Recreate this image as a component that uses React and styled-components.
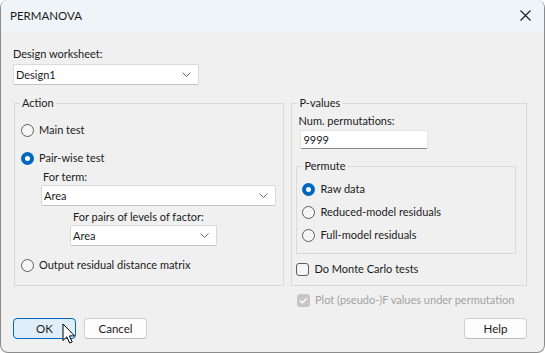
import React from "react";
import styled, { createGlobalStyle } from "styled-components";

const Global = createGlobalStyle`
  html, body { margin: 0; padding: 0; background: #ffffff; }
  body { font-family: Lato, "Noto Sans", sans-serif; font-size: 11px; color: #1b1b1b; }
  * { box-sizing: border-box; }
`;

const Window = styled.div`
  width: 545px;
  height: 353px;
  border: 1px solid #8c8c8c;
  border-top: none;
  border-radius: 8px;
  background: #f0f0f0;
  overflow: hidden;
  position: relative;
  display: flex;
  flex-direction: column;
`;

const TitleBar = styled.div`
  height: 31px;
  background: #eff4f9;
  display: flex;
  align-items: center;
  justify-content: space-between;
  padding: 0 13px 0 9px;
  font-size: 11.5px;
  color: #1a1a1a;
`;

const Body = styled.div`
  flex: 1;
  padding: 15px 17px 0 12px;
  display: flex;
  flex-direction: column;
`;

const Label = styled.div`
  line-height: 16px;
  height: 16px;
  white-space: nowrap;
  margin-left: ${(p) => p.$indent || 0}px;
  margin-top: ${(p) => p.$mt || 0}px;
`;

const SelectBox = styled.div`
  width: ${(p) => p.$w}px;
  height: 21px;
  margin-left: ${(p) => p.$indent || 0}px;
  margin-top: ${(p) => p.$mt || 0}px;
  background: #ffffff;
  border: 1px solid #d9d9d9;
  border-bottom-color: #c4c4c4;
  border-radius: 2px;
  display: flex;
  align-items: center;
  justify-content: space-between;
  padding: 0 7px 0 2px;
  line-height: 16px;
`;

const Chevron = () => (
  <svg width="9" height="5" viewBox="0 0 9 5">
    <path d="M0.5 0.5 L4.5 4.5 L8.5 0.5" fill="none" stroke="#6b6b6b" strokeWidth="1" />
  </svg>
);

const Select = ({ w, indent, mt, children }) => (
  <SelectBox $w={w} $indent={indent} $mt={mt}>
    <span>{children}</span>
    <Chevron />
  </SelectBox>
);

const Columns = styled.div`
  display: flex;
  gap: 7px;
  margin-top: 10px;
  margin-left: 1px;
`;

const Group = styled.fieldset`
  margin: 0;
  margin-left: ${(p) => p.$indent || 0}px;
  margin-top: ${(p) => p.$mt || 0}px;
  width: ${(p) => p.$w}px;
  border: 1px solid #dadada;
  padding: 0;
  min-width: 0;
`;

const Legend = styled.legend`
  margin-left: 5px;
  padding: 0 2px;
  line-height: 16px;
`;

const GroupBody = styled.div`
  display: flex;
  flex-direction: column;
  padding: ${(p) => p.$pad};
`;

const OptionRow = styled.div`
  display: flex;
  align-items: center;
  height: 16px;
  line-height: 16px;
  white-space: nowrap;
  margin-top: ${(p) => p.$mt || 0}px;
  margin-left: ${(p) => p.$ml || 0}px;
  color: ${(p) => (p.$disabled ? "#a3a3a3" : "#1b1b1b")};
`;

const RadioDot = styled.span`
  width: 13px;
  height: 13px;
  border-radius: 50%;
  flex: none;
  margin-right: 5px;
  border: ${(p) => (p.$on ? "none" : "1px solid #5f5f5f")};
  background: ${(p) => (p.$on ? "#0067c0" : "#f6f6f6")};
  display: flex;
  align-items: center;
  justify-content: center;
  &::after {
    content: "";
    display: ${(p) => (p.$on ? "block" : "none")};
    width: 5px;
    height: 5px;
    border-radius: 50%;
    background: #ffffff;
  }
`;

const Radio = ({ on, children, mt, ml }) => (
  <OptionRow $mt={mt} $ml={ml}>
    <RadioDot $on={on} />
    {children}
  </OptionRow>
);

const CheckBoxBox = styled.span`
  width: 13px;
  height: 13px;
  border-radius: 3px;
  flex: none;
  margin-right: 5px;
  border: ${(p) => (p.$disabled ? "none" : "1px solid #5f5f5f")};
  background: ${(p) => (p.$disabled ? "#c6c6c6" : "#f6f6f6")};
  display: flex;
  align-items: center;
  justify-content: center;
`;

const Check = ({ checked, disabled, children, mt, ml }) => (
  <OptionRow $mt={mt} $ml={ml} $disabled={disabled}>
    <CheckBoxBox $disabled={disabled}>
      {checked && (
        <svg width="9" height="7" viewBox="0 0 9 7">
          <path d="M1 3.5 L3.4 5.8 L8 1.2" fill="none" stroke="#ffffff" strokeWidth="1.3" />
        </svg>
      )}
    </CheckBoxBox>
    {children}
  </OptionRow>
);

const Input = styled.div`
  width: 128px;
  height: 19px;
  margin-left: 2px;
  margin-top: 1px;
  background: #ffffff;
  border: 1px solid #e3e3e3;
  border-bottom: 1px solid #8a8a8a;
  border-radius: 2px;
  padding: 0 2px;
  line-height: 17px;
`;

const ButtonRow = styled.div`
  display: flex;
  align-items: center;
  gap: 8px;
  margin-top: 10px;
`;

const Spacer = styled.div`
  flex: 1;
`;

const Button = styled.div`
  width: 63px;
  height: 21px;
  border-radius: 4px;
  display: flex;
  align-items: center;
  justify-content: center;
  line-height: 16px;
  font-size: 11.5px;
  background: ${(p) => (p.$primary ? "#e0eef9" : "#fdfdfd")};
  border: 1px solid ${(p) => (p.$primary ? "#0067c0" : "#d0d0d0")};
  border-bottom-color: ${(p) => (p.$primary ? "#0067c0" : "#bdbdbd")};
`;

const Cursor = styled.svg`
  position: absolute;
  left: 61px;
  top: 323px;
`;

export default function App() {
  return (
    <>
      <Global />
      <Window>
        <TitleBar>
          <span>PERMANOVA</span>
          <svg width="11" height="11" viewBox="0 0 11 11">
            <path d="M0.5 0.5 L10.5 10.5 M10.5 0.5 L0.5 10.5" stroke="#1a1a1a" strokeWidth="1.1" />
          </svg>
        </TitleBar>
        <Body>
          <Label>Design worksheet:</Label>
          <Select w={186} mt={2}>Design1</Select>
          <Columns>
            <Group $w={271}>
              <Legend>Action</Legend>
              <GroupBody $pad="11px 0 12px 6px">
                <Radio>Main test</Radio>
                <Radio on mt={12}>Pair-wise test</Radio>
                <Label $indent={22} $mt={3}>For term:</Label>
                <Select w={235} indent={20}>Area</Select>
                <Label $indent={52} $mt={3}>For pairs of levels of factor:</Label>
                <Select w={147} indent={49}>Area</Select>
                <Radio mt={11}>Output residual distance matrix</Radio>
              </GroupBody>
            </Group>
            <Group $w={236}>
              <Legend>P-values</Legend>
              <GroupBody $pad="2px 0 8px 6px">
                <Label>Num. permutations:</Label>
                <Input>9999</Input>
                <Group $w={220} $indent={-2} $mt={9}>
                  <Legend>Permute</Legend>
                  <GroupBody $pad="7px 0 10px 5px">
                    <Radio on>Raw data</Radio>
                    <Radio mt={7}>Reduced-model residuals</Radio>
                    <Radio mt={7}>Full-model residuals</Radio>
                  </GroupBody>
                </Group>
                <Check mt={7} ml={-2}>Do Monte Carlo tests</Check>
              </GroupBody>
            </Group>
          </Columns>
          <Check checked disabled mt={6} ml={284}>
            Plot (pseudo-)F values under permutation
          </Check>
          <ButtonRow>
            <Button $primary>OK</Button>
            <Button>Cancel</Button>
            <Spacer />
            <Button>Help</Button>
          </ButtonRow>
        </Body>
        <Cursor width="14" height="22" viewBox="0 0 14 22">
          <path
            d="M1 1 L1 17.5 L4.8 13.8 L7.6 20 L10.2 19 L7.4 12.9 L12.6 12.9 Z"
            fill="#ffffff"
            stroke="#000000"
            strokeWidth="1"
            strokeLinejoin="miter"
          />
        </Cursor>
      </Window>
    </>
  );
}
